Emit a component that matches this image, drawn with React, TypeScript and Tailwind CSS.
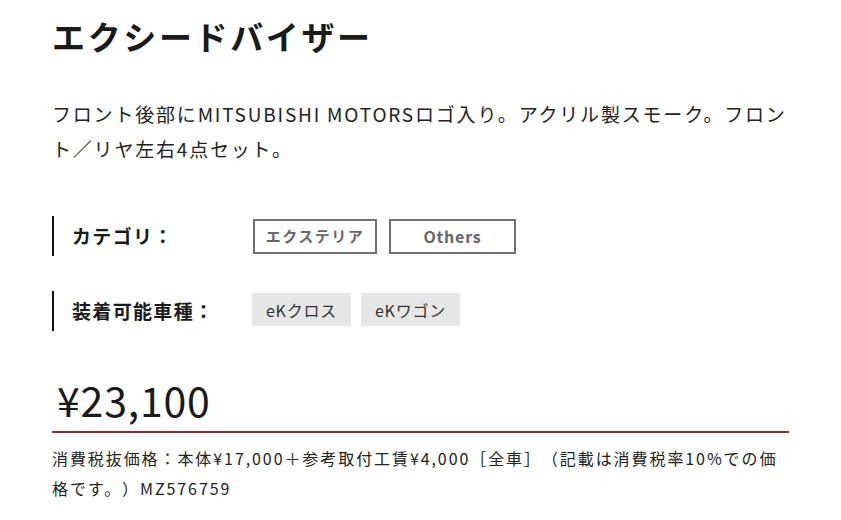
const font = { fontFamily: '"Noto Sans CJK JP", "Noto Sans", sans-serif' };

const LabelRow = ({ label, children }: { label: string; children: React.ReactNode }) => (
  <div className="flex items-center">
    <div className="flex items-center w-[201px] h-[40px] border-l-2 border-[#111]">
      <span className="pl-[18px] text-[19px] font-bold tracking-[0.07em] text-[#1a1a1a]">{label}</span>
    </div>
    <div className="flex items-center">{children}</div>
  </div>
);

export default function App() {
  return (
    <div style={font} className="w-[841px] h-[520px] bg-white px-[52px] pt-[16px] text-[#1a1a1a] overflow-hidden [text-spacing-trim:space-all]">
      <h1 className="text-[33px] leading-[40px] font-bold tracking-[0.08em]">エクシードバイザー</h1>

      <p className="mt-[40px] text-[19px] leading-[35px] tracking-[0.095em] text-[#222]">
        フロント後部にMITSUBISHI MOTORSロゴ入り。アクリル製スモーク。フロン
        <br />
        ト／リヤ左右4点セット。
      </p>

      <div className="mt-[50px] flex flex-col gap-[35px]">
        <LabelRow label="カテゴリ：">
          <div className="flex gap-[12px]">
            <span className="w-[124px] h-[35px] flex items-center justify-center border-2 border-[#707070] text-[15px] font-bold tracking-[0.1em] text-[#666]">エクステリア</span>
            <span className="w-[127px] h-[35px] flex items-center justify-center border-2 border-[#707070] text-[16px] font-bold tracking-[0.05em] text-[#666]">Others</span>
          </div>
        </LabelRow>
        <LabelRow label="装着可能車種：">
          <div className="flex gap-[10px] -ml-[1px] -mt-[3px]">
            <span className="w-[99px] h-[33px] flex items-center justify-center bg-[#e6e6e6] text-[16px] tracking-[0.05em] text-[#333]">eKクロス</span>
            <span className="w-[99px] h-[33px] flex items-center justify-center bg-[#e6e6e6] text-[16px] tracking-[0.05em] text-[#333]">eKワゴン</span>
          </div>
        </LabelRow>
      </div>

      <div className="mt-[44px] pl-[5px] pb-[8px] border-b-2 border-[#8e2b2e] text-[41px] leading-[48px] tracking-[0.02em] text-[#1a1a1a]">
        ¥23,100
      </div>

      <p className="mt-[10px] text-[16px] leading-[30px] tracking-[0.12em] text-[#222]">
        消費税抜価格：本体¥17,000＋参考取付工賃¥4,000［全車］（記載は消費税率10%での価格です。）MZ576759
      </p>
    </div>
  );
}
